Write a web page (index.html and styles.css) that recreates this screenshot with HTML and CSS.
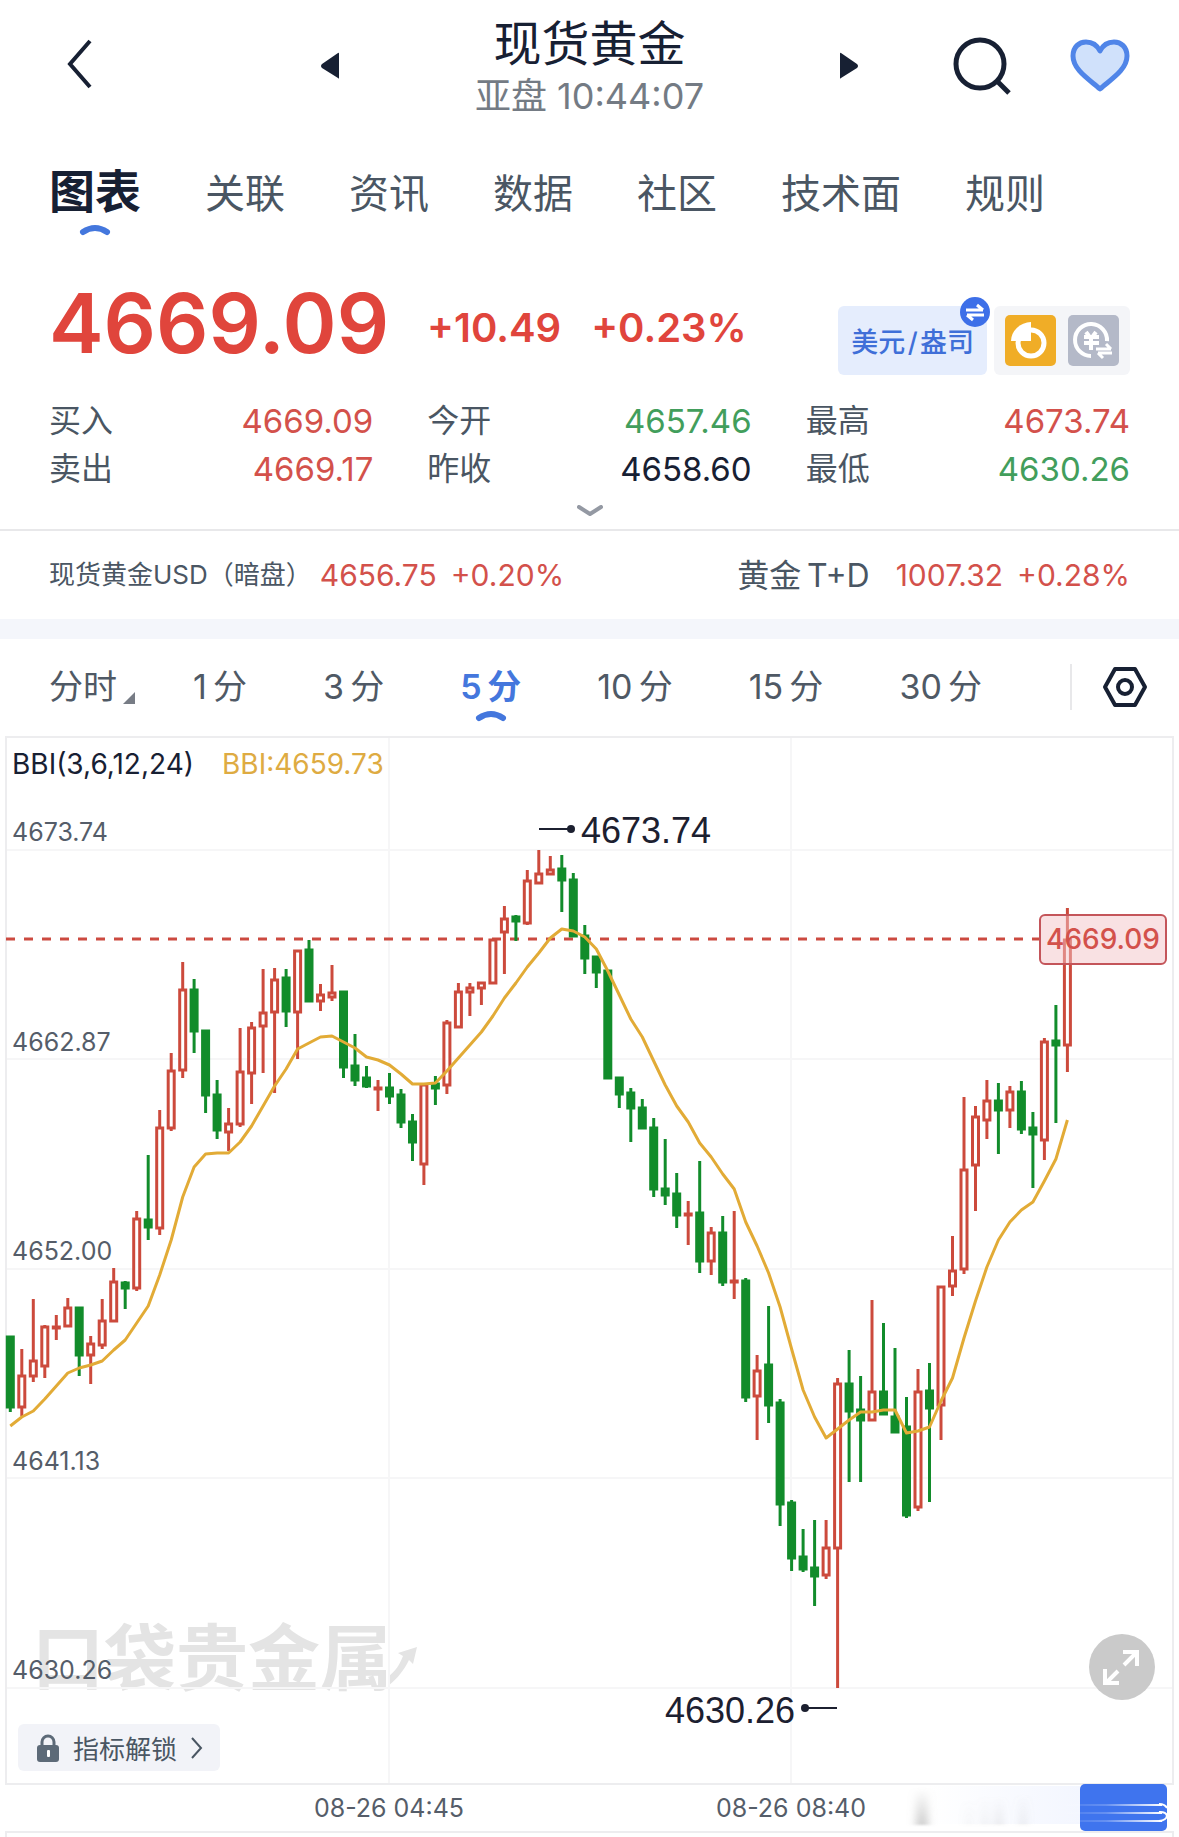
FILE: index.html
```
<!DOCTYPE html>
<html lang="zh-CN">
<head>
  <meta charset="UTF-8" />
  <title>现货黄金</title>
  <meta name="viewport" content="width=device-width, initial-scale=1.0" />
  <link rel="stylesheet" href="styles.css">
</head>
<body>

  <header class="topbar">
    <div class="topbar-left">
      <button class="icon-btn back" aria-label="返回">
        <svg width="26" height="50" viewBox="0 0 26 50"><path d="M24 2 L4 25 L24 48" fill="none" stroke="#172033" stroke-width="4"/></svg>
      </button>
    </div>
    <div class="topbar-center">
      <button class="icon-btn" aria-label="上一个">
        <svg width="18" height="28" viewBox="0 0 18 28"><path d="M18 2 V26 Q18 27 17 26 L1 16 Q-1 14 1 12 L17 1 Q18 0 18 2Z" fill="#172033"/></svg>
      </button>
      <div class="title-box">
        <h1>现货黄金</h1>
        <p>亚盘 10:44:07</p>
      </div>
      <button class="icon-btn" aria-label="下一个">
        <svg width="18" height="28" viewBox="0 0 18 28"><path d="M0 2 V26 Q0 27 1 26 L17 16 Q19 14 17 12 L1 1 Q0 0 0 2Z" fill="#172033"/></svg>
      </button>
    </div>
    <div class="topbar-right">
      <button class="icon-btn" aria-label="搜索">
        <svg width="58" height="58" viewBox="0 0 58 58"><circle cx="27" cy="27" r="24" fill="none" stroke="#172033" stroke-width="5"/><path d="M43 43 L56 56" stroke="#172033" stroke-width="5"/></svg>
      </button>
      <button class="icon-btn" aria-label="自选">
        <svg width="60" height="54" viewBox="0 0 60 54"><path d="M30 50 C20 41 3 31 3 17 C3 8 9 3 16 3 C22 3 27 6 30 12 C33 6 38 3 44 3 C51 3 57 8 57 17 C57 31 40 41 30 50Z" fill="#d0e1fb" stroke="#5085e8" stroke-width="5" stroke-linejoin="round"/></svg>
      </button>
    </div>
  </header>

  <nav class="tabs">
    <a href="#" class="active">图表
      <svg width="32" height="12" viewBox="0 0 32 12"><path d="M4 8 Q16 0 28 8" fill="none" stroke="#4477dd" stroke-width="6" stroke-linecap="round"/></svg>
    </a>
    <a href="#">关联</a>
    <a href="#">资讯</a>
    <a href="#">数据</a>
    <a href="#">社区</a>
    <a href="#">技术面</a>
    <a href="#">规则</a>
  </nav>

  <section class="price">
    <div class="price-left">
      <strong class="last">4669.09</strong>
      <span class="change">+10.49</span>
      <span class="change">+0.23%</span>
    </div>
    <div class="chips">
      <button class="unit">美元&#8202;/&#8202;盎司
        <svg class="swap" width="32" height="32" viewBox="0 0 32 32"><circle cx="16" cy="16" r="15" fill="#3d6fe8"/><path d="M7 14 H24 M18 9 L24 14 M25 19 H8 M14 24 L8 19" fill="none" stroke="#fff" stroke-width="3"/></svg>
      </button>
      <div class="tools">
        <button class="icon-btn" aria-label="仓位">
          <svg width="51" height="51" viewBox="0 0 51 51"><rect width="51" height="51" rx="5" fill="#f0ad27"/><circle cx="26" cy="28" r="13" fill="none" stroke="#fff" stroke-width="5"/><path d="M26 7 A21 19 0 0 0 6 26 H26Z" fill="#fff"/></svg>
        </button>
        <button class="icon-btn" aria-label="换算">
          <svg width="51" height="51" viewBox="0 0 51 51"><rect width="51" height="51" rx="5" fill="#b4b9c8"/><path d="M39 26 A16 16 0 1 0 23 41" fill="none" stroke="#fff" stroke-width="4"/><path d="M18 17 L21 21 M28 17 L25 21 M16 22 H31 M16 28 H31 M23 21 V35" fill="none" stroke="#fff" stroke-width="4"/><path d="M28 34 H43 M38 29 L43 34 M44 38 H30 M35 43 L30 38" fill="none" stroke="#fff" stroke-width="3"/></svg>
        </button>
      </div>
    </div>
  </section>

  <dl class="quotes">
    <div><dt>买入</dt><dd class="up">4669.09</dd></div>
    <div><dt>今开</dt><dd class="down">4657.46</dd></div>
    <div><dt>最高</dt><dd class="up">4673.74</dd></div>
    <div><dt>卖出</dt><dd class="up">4669.17</dd></div>
    <div><dt>昨收</dt><dd>4658.60</dd></div>
    <div><dt>最低</dt><dd class="down">4630.26</dd></div>
  </dl>
  <button class="more" aria-label="展开">
    <svg width="26" height="12" viewBox="0 0 26 12"><path d="M2 2 L13 9 L24 2" fill="none" stroke="#9499a3" stroke-width="4" stroke-linecap="round" stroke-linejoin="round"/></svg>
  </button>

  <section class="related">
    <a href="#"><span class="small">现货黄金USD（暗盘）</span><span class="num">4656.75</span><span class="num">+0.20%</span></a>
    <a href="#"><span class="name">黄金&#8201;T+D</span><span class="num">1007.32</span><span class="num">+0.28%</span></a>
  </section>

  <nav class="periods">
    <button class="first">分时<svg width="12" height="12" viewBox="0 0 12 12"><path d="M12 0 V12 H0Z" fill="#777c85"/></svg></button>
    <button>1&#8201;分</button>
    <button>3&#8201;分</button>
    <button class="active">5&#8201;分
      <svg width="32" height="12" viewBox="0 0 32 12"><path d="M4 8 Q16 0 28 8" fill="none" stroke="#4477dd" stroke-width="6" stroke-linecap="round"/></svg>
    </button>
    <button>10&#8201;分</button>
    <button>15&#8201;分</button>
    <button>30&#8201;分</button>
    <button class="settings" aria-label="设置">
      <svg width="46" height="42" viewBox="0 0 46 42"><path d="M13 3 H33 L43 21 L33 39 H13 L3 21Z" fill="none" stroke="#172033" stroke-width="4" stroke-linejoin="round"/><circle cx="23" cy="21" r="7" fill="none" stroke="#172033" stroke-width="4"/></svg>
    </button>
  </nav>

  <main class="chart">
    <svg class="chart-svg" viewBox="0 736 1179 1101">
      <defs>
        <linearGradient id="fadeBlue" x1="0" x2="1">
          <stop offset="0" stop-color="#fff"/>
          <stop offset="1" stop-color="#f3f6ff"/>
        </linearGradient>
        <linearGradient id="streak" x1="0" x2="1">
          <stop offset="0" stop-color="#fff" stop-opacity="0"/>
          <stop offset="0.5" stop-color="#fff" stop-opacity="0.2"/>
          <stop offset="1" stop-color="#fff"/>
        </linearGradient>
        <linearGradient id="smudge" x1="0" y1="0" x2="0" y2="1">
          <stop offset="0" stop-color="#999" stop-opacity="0"/>
          <stop offset="1" stop-color="#999" stop-opacity="0.5"/>
        </linearGradient>
        <filter id="soft" x="-100%" width="300%"><feGaussianBlur stdDeviation="4 1"/></filter>
      </defs>

      <g class="watermark">
        <text x="32" y="1684">口袋贵金属</text>
        <path d="M388 1686 C398 1678 404 1670 409 1660 L413 1664 L417 1647 L398 1653 L403 1656 C399 1666 396 1670 388 1677Z"/>
      </g>

      <g class="grid">
        <path d="M6 850 H1173 M6 1059 H1173 M6 1269 H1173 M6 1478 H1173 M6 1688 H1173 M389 737 V1784 M791 737 V1784"/>
        <path class="frame" d="M6 737 H1173 V1784 H6Z M6 1840 V1832 H1173 V1840"/>
      </g>

      <path class="last-line" d="M6 939 H1039"/>
      <g id="candles"></g>
      <polyline id="bbi" class="bbi"/>

      <text class="legend" x="12" y="774">BBI(3,6,12,24)</text>
      <text class="legend gold" x="222" y="774">BBI:4659.73</text>

      <g class="axis">
        <text x="12" y="841">4673.74</text>
        <text x="12" y="1051">4662.87</text>
        <text x="12" y="1260">4652.00</text>
        <text x="12" y="1470">4641.13</text>
        <text x="12" y="1679">4630.26</text>
        <text x="389" y="1817" text-anchor="middle">08-26 04:45</text>
        <text x="791" y="1817" text-anchor="middle">08-26 08:40</text>
      </g>

      <g class="mark">
        <path d="M539 829 H571 M805 1708 H837"/>
        <circle cx="571" cy="829" r="4"/>
        <circle cx="805" cy="1708" r="4"/>
        <text x="581" y="843">4673.74</text>
        <text x="665" y="1723">4630.26</text>
      </g>

      <g class="tag">
        <rect x="1040" y="915" width="126" height="49" rx="5"/>
        <text x="1103" y="949" text-anchor="middle">4669.09</text>
      </g>

      <rect x="930" y="1786" width="150" height="38" fill="url(#fadeBlue)"/>
      <g fill="url(#smudge)" filter="url(#soft)">
        <rect x="916" y="1788" width="12" height="37"/>
        <rect x="966" y="1800" width="6" height="25" opacity="0.2"/>
        <rect x="982" y="1796" width="6" height="29" opacity="0.3"/>
        <rect x="996" y="1796" width="6" height="29" opacity="0.5"/>
        <rect x="1020" y="1794" width="6" height="31" opacity="0.4"/>
      </g>
      <rect x="1080" y="1784" width="87" height="47" rx="5" fill="#3f74ee"/>
      <rect x="1050" y="1804" width="112" height="2" fill="url(#streak)"/>
      <rect x="1050" y="1812" width="112" height="2" fill="url(#streak)"/>
      <rect x="1050" y="1820" width="112" height="2" fill="url(#streak)"/>
      <path d="M1159 1804 Q1165 1804 1167 1808 M1159 1812 C1169 1811 1170 1820 1159 1821" fill="none" stroke="#fff" stroke-width="2"/>
    </svg>

    <button class="unlock">
      <svg width="22" height="28" viewBox="0 0 22 28"><path d="M5 12 V8 A6 6 0 0 1 17 8 V12" fill="none" stroke="#5d6a78" stroke-width="3"/><rect y="11" width="22" height="17" rx="3" fill="#5d6a78"/><rect x="10" y="16" width="3" height="7" rx="1" fill="#fff"/></svg>
      指标解锁
      <svg width="12" height="22" viewBox="0 0 12 22"><path d="M1 1 L10 11 L1 21" fill="none" stroke="#4a5663" stroke-width="2"/></svg>
    </button>
    <button class="expand" aria-label="全屏">
      <svg width="66" height="66" viewBox="0 0 66 66"><path d="M35 31 L47 19 M34 18 H48 V32 M29 37 L17 49 M16 35 V49 H30" fill="none" stroke="#fff" stroke-width="4"/></svg>
    </button>
  </main>

  <script src="chart.js"></script>
</body>
</html>
```

FILE: styles.css
```
* {
  box-sizing: border-box;
}

body {
  margin: 0;
  background: #fff;
  color: #172033;
  font-family: Inter, "Noto Sans CJK SC", sans-serif;
}

h1, p, dl, dd {
  margin: 0;
}

button {
  padding: 0;
  border: none;
  background: none;
  color: inherit;
  font-family: inherit;
  cursor: pointer;
}

a {
  color: inherit;
  text-decoration: none;
}

svg {
  display: block;
}

/* top bar */
.topbar {
  display: grid;
  grid-template-columns: 1fr auto 1fr;
  align-items: center;
  height: 130px;
  padding: 2px 49px 0;
}

.back {
  margin-left: 17px;
}

.topbar-center {
  display: flex;
  align-items: center;
  gap: 136px;
}

.title-box {
  text-align: center;
}

h1 {
  font-size: 48px;
  font-weight: 400;
  line-height: 60px;
}

.title-box p {
  font-size: 36px;
  line-height: 44px;
  color: #747b84;
}

.topbar-right {
  display: flex;
  align-items: center;
  justify-content: flex-end;
  gap: 59px;
}

/* tabs */
.tabs {
  display: flex;
  gap: 64px;
  height: 110px;
  padding: 36px 49px 0;
}

.tabs a {
  display: flex;
  flex-direction: column;
  align-items: center;
  font-size: 40px;
  line-height: 56px;
  color: #4a5663;
}

.tabs .active {
  gap: 8px;
  font-size: 46px;
  font-weight: 700;
  line-height: 50px;
  color: #172033;
}

/* price */
.price {
  display: flex;
  justify-content: space-between;
  padding: 40px 49px 0;
}

.price-left {
  display: flex;
  gap: 30px;
  color: #e0453c;
}

.last {
  margin-right: 8px;
  font-size: 82px;
  font-weight: 600;
  line-height: 88px;
}

.change {
  padding-top: 8px;
  font-size: 40px;
  font-weight: 600;
  line-height: 80px;
}

.chips {
  display: flex;
  gap: 7px;
  padding-top: 26px;
}

.unit {
  position: relative;
  height: 69px;
  padding: 0 13px;
  border-radius: 6px;
  background: #e5edfd;
  color: #3f6fd8;
  font-size: 27px;
  font-weight: 500;
}

.swap {
  position: absolute;
  top: -10px;
  right: -4px;
}

.tools {
  display: flex;
  align-items: center;
  gap: 12px;
  height: 69px;
  padding: 0 11px;
  border-radius: 6px;
  background: #f4f5f8;
}

.quotes {
  display: grid;
  grid-template-columns: repeat(3, 1fr);
  column-gap: 54px;
  padding: 22px 49px 0;
  font-size: 32px;
  line-height: 48px;
}

.quotes div {
  display: flex;
  justify-content: space-between;
}

.quotes dt {
  color: #4a5663;
}

.quotes dd {
  font-size: 33px;
}

.up {
  color: #d3514b;
}

.down {
  color: #429e5c;
}

.more {
  display: flex;
  justify-content: center;
  width: 100%;
  height: 36px;
  padding-top: 12px;
}

.related {
  display: flex;
  justify-content: space-between;
  padding: 0 49px;
  border-top: 2px solid #e8e8ea;
  border-bottom: 20px solid #f4f6fb;
}

.related a {
  display: flex;
  align-items: center;
  height: 88px;
  color: #4a5663;
}

.small,
.name {
  padding-bottom: 5px;
}

.small {
  margin-right: 8px;
  font-size: 26px;
}

.name {
  margin-right: 26px;
  font-size: 32px;
}

.num {
  font-size: 30px;
  color: #d3514b;
}

.num + .num {
  margin-left: 14px;
}

/* periods */
.periods {
  display: flex;
  gap: 76px;
  height: 97px;
  padding: 25px 31px 0 49px;
}

.periods button {
  display: flex;
  flex-direction: column;
  align-items: center;
  font-size: 34px;
  line-height: 46px;
  color: #4f5965;
  white-space: nowrap;
}

.periods .first {
  flex-direction: row;
  align-items: flex-start;
  gap: 6px;
  margin-right: -18px;
}

.first svg {
  margin-top: 28px;
}

.periods .active {
  color: #4477dd;
  font-weight: 600;
}

.periods .settings {
  justify-content: center;
  height: 46px;
  margin-left: auto;
  padding-left: 30px;
  border-left: 2px solid #e8e8ea;
}

/* chart */
.chart {
  position: relative;
}

.chart-svg {
  width: 100%;
}

.grid path {
  fill: none;
  stroke: #f6f6f7;
  stroke-width: 2;
}

.grid .frame {
  stroke: #ededef;
}

.watermark {
  fill: #e4e4e4;
  font-family: "Noto Sans CJK SC", sans-serif;
  font-size: 72px;
  font-weight: 700;
}

.last-line {
  stroke: #cc4a40;
  stroke-width: 3;
  stroke-dasharray: 9 9;
}

.rise {
  fill: #fff;
  stroke: #cc4a3c;
}

.fall {
  fill: #128c2b;
  stroke: #128c2b;
}

.bbi {
  fill: none;
  stroke: #e2ab36;
  stroke-width: 3;
  stroke-linejoin: round;
}

.legend {
  fill: #172033;
  font-size: 28px;
}

.gold {
  fill: #deab42;
}

.axis {
  fill: #555d69;
  font-size: 25px;
}

.mark {
  fill: #1c2030;
  stroke-width: 2;
  font-family: "Liberation Sans", sans-serif;
  font-size: 36px;
}

.mark path {
  stroke: #1c2030;
}

.tag rect {
  fill: #f3c4c7;
  fill-opacity: 0.5;
  stroke: #c4555a;
  stroke-width: 2;
}

.tag text {
  fill: #d3514b;
  font-size: 28px;
  font-weight: 500;
}

.unlock {
  position: absolute;
  left: 18px;
  bottom: 66px;
  display: flex;
  align-items: center;
  gap: 14px;
  height: 47px;
  padding: 0 17px 0 19px;
  border-radius: 6px;
  background: #f2f3f8;
  color: #4a5663;
  font-size: 26px;
}

.expand {
  position: absolute;
  right: 24px;
  bottom: 137px;
  border-radius: 50%;
  background: #cacaca;
}
```

FILE: chart.js
```
// [rising, high, body top, body bottom, low]
const candles = [
  [0,1336,1336,1408,1412],[1,1349,1375,1408,1416],[1,1299,1360,1377,1382],[1,1325,1326,1367,1378],
  [1,1315,1326,1328,1340],[1,1298,1307,1327,1327],[0,1307,1307,1356,1376],[1,1336,1343,1356,1384],
  [1,1299,1320,1346,1349],[1,1268,1281,1322,1322],[0,1281,1282,1289,1309],[1,1211,1218,1289,1291],
  [0,1155,1219,1228,1240],[1,1110,1127,1229,1235],[1,1053,1070,1129,1131],[1,962,989,1071,1078],
  [0,979,989,1032,1053],[0,1030,1030,1096,1113],[0,1080,1094,1131,1139],[1,1108,1123,1133,1151],
  [1,1028,1071,1125,1127],[1,1022,1027,1074,1104],[1,969,1012,1027,1073],[1,968,979,1013,1093],
  [0,969,977,1012,1027],[1,950,950,1013,1059],[0,940,949,1002,1002],[1,984,994,1002,1011],
  [1,965,992,998,1001],[0,991,991,1068,1078],[0,1034,1065,1081,1086],[0,1066,1077,1087,1088],
  [1,1080,1087,1089,1111],[0,1073,1087,1097,1104],[0,1089,1094,1123,1128],[0,1114,1121,1143,1161],
  [1,1084,1084,1165,1185],[0,1076,1083,1089,1105],[1,1020,1022,1086,1094],[1,983,991,1028,1028],
  [1,983,987,993,1016],[1,982,982,989,1005],[1,939,939,984,984],[1,906,918,933,974],
  [0,915,916,922,941],[1,870,880,924,925],[1,850,873,884,884],[1,856,869,875,875],
  [0,855,868,881,912],[0,873,879,937,937],[0,925,935,959,974],[0,956,956,973,988],
  [0,970,970,1079,1079],[0,1077,1077,1095,1108],[0,1088,1092,1109,1142],[0,1099,1107,1129,1129],
  [0,1118,1127,1190,1197],[0,1139,1188,1196,1205],[0,1173,1193,1216,1228],[1,1201,1213,1215,1245],
  [0,1161,1212,1262,1273],[1,1227,1232,1262,1275],[0,1216,1232,1283,1286],[1,1211,1280,1282,1299],
  [0,1278,1280,1398,1402],[1,1355,1370,1397,1440],[0,1306,1364,1406,1423],[0,1399,1402,1505,1526],
  [0,1500,1502,1559,1571],[0,1529,1556,1570,1572],[0,1520,1567,1577,1606],[1,1520,1547,1576,1579],
  [1,1378,1383,1549,1688],[0,1350,1383,1412,1482],[0,1376,1409,1421,1482],[1,1300,1391,1421,1421],
  [0,1323,1391,1415,1415],[0,1348,1416,1433,1433],[0,1397,1426,1516,1518],[1,1369,1391,1508,1511],
  [0,1363,1390,1409,1502],[1,1286,1286,1406,1440],[1,1236,1270,1287,1296],[1,1097,1169,1270,1274],
  [1,1106,1116,1166,1211],[1,1080,1100,1121,1139],[0,1083,1100,1111,1154],[1,1086,1091,1111,1128],
  [0,1081,1091,1130,1134],[0,1112,1127,1135,1188],[1,1038,1041,1141,1160],[0,1005,1040,1046,1123],
  [1,908,939,1046,1072]
];

const bbi = [
  1426,1417,1411,1399,1386,1373,1368,1365,1361,1350,1340,1323,1306,1275,1240,1197,1167,1154,1153,1153,
  1142,1126,1106,1086,1069,1049,1043,1037,1036,1042,1048,1057,1060,1065,1074,1084,1084,1083,1071,1058,
  1045,1032,1016,998,983,967,953,938,929,931,937,949,971,995,1019,1037,1061,1085,1106,1122,
  1143,1157,1174,1189,1222,1246,1273,1307,1349,1390,1417,1438,1429,1420,1412,1412,1410,1410,1433,1431,
  1427,1401,1378,1338,1301,1267,1240,1222,1210,1202,1181,1159,1120
];

const step = 11.49;
const x = i => (10.3 + i * step).toFixed(1);

let out = '';
candles.forEach(([rising, high, top, bottom, low], i) => {
  const h = Math.max(bottom - top - 2, 1);
  out += `<g class="${rising ? 'rise' : 'fall'}" stroke-width="3">
    <path d="M${x(i)} ${high} V${low}"/>
    <rect x="${(x(i) - 3).toFixed(1)}" y="${top + 1}" width="6" height="${h}"/>
  </g>`;
});
document.getElementById('candles').innerHTML = out;
document.getElementById('bbi').setAttribute('points', bbi.map((y, i) => x(i) + ',' + y).join(' '));
```
